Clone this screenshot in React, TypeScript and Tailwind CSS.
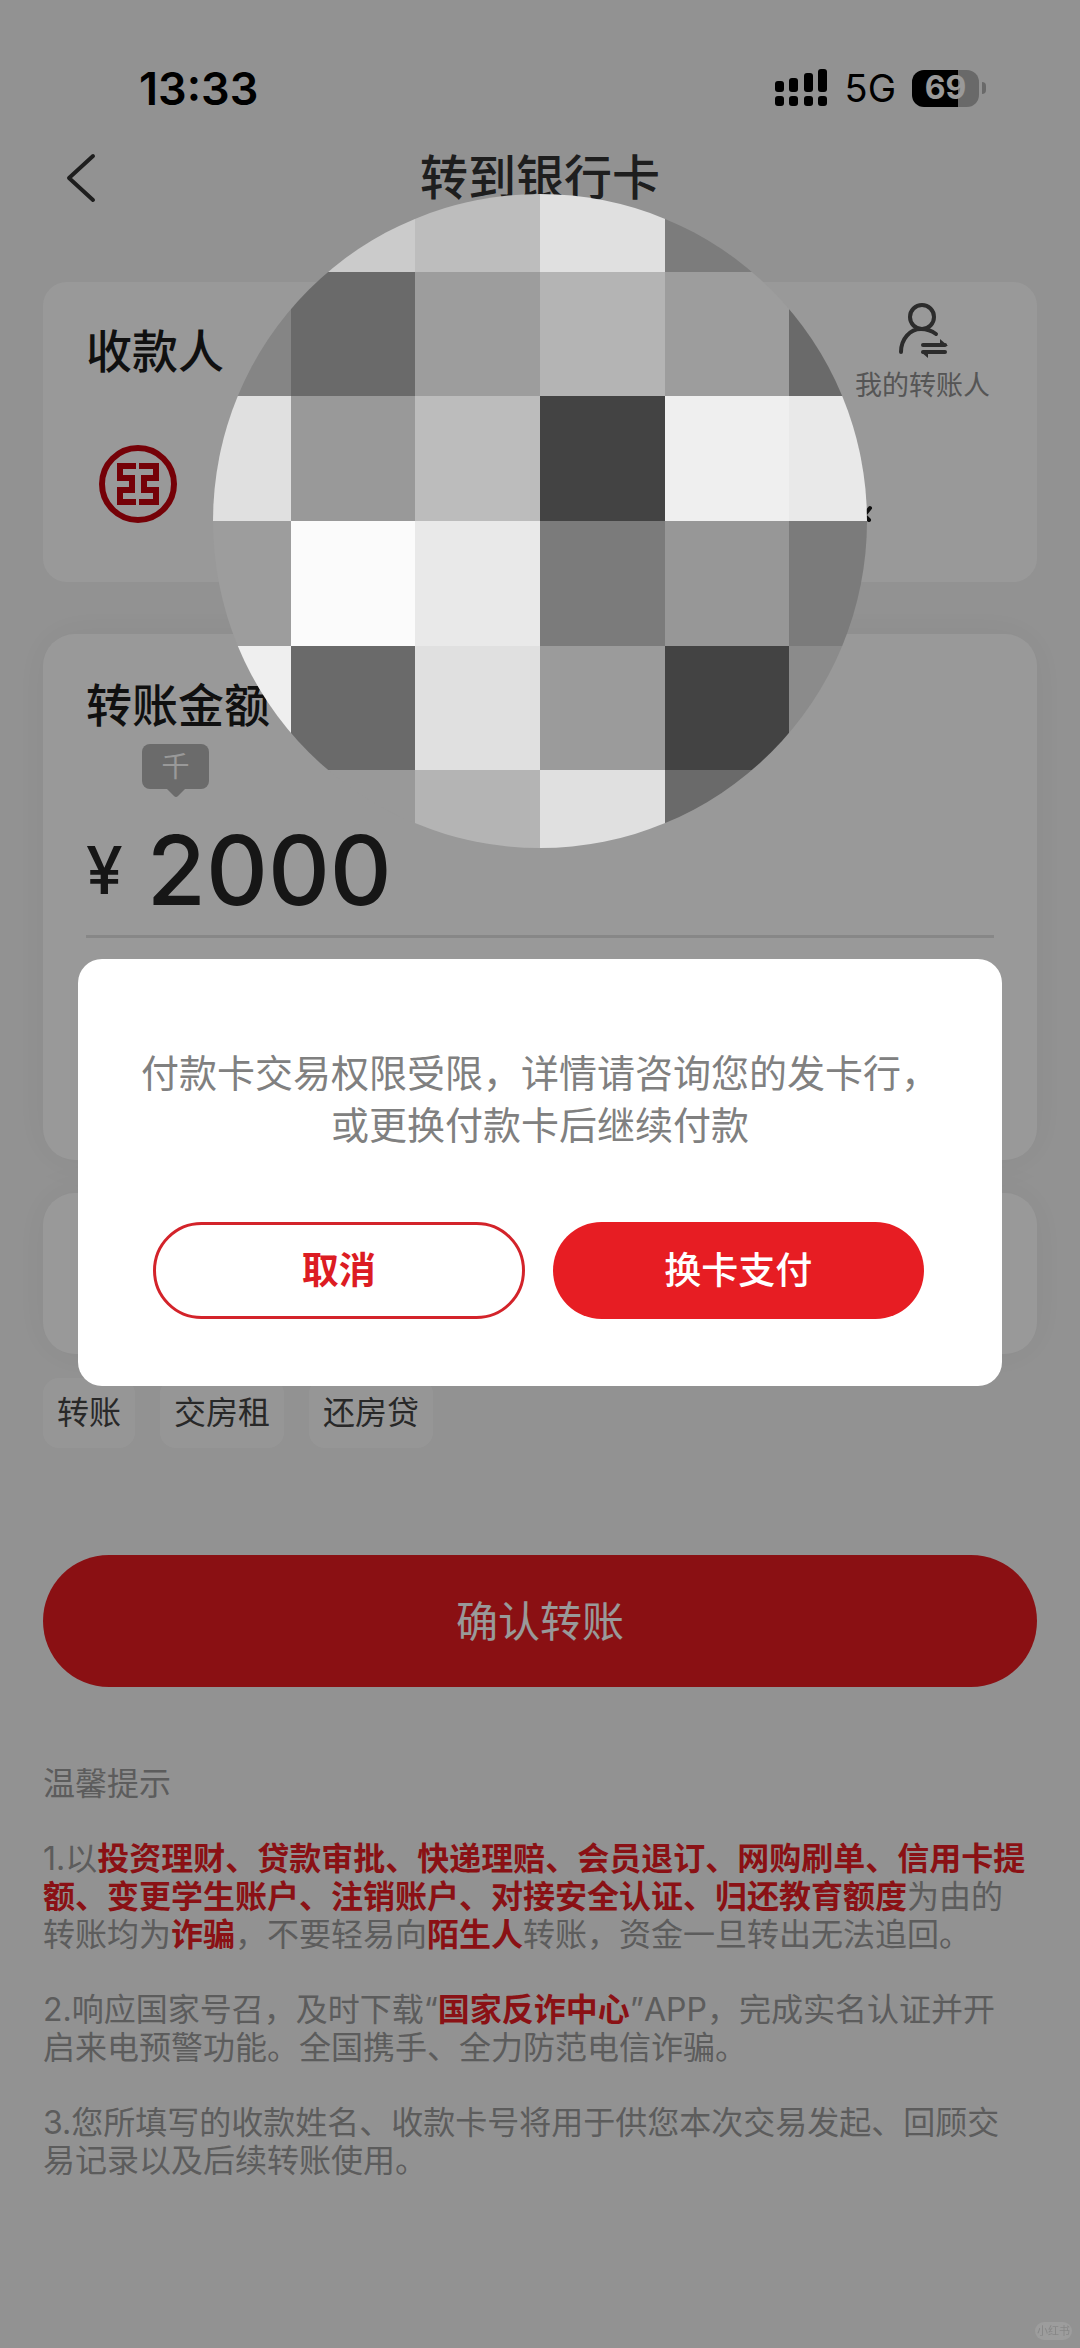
import React from "react";

const mosaic = [
  ["#929292", "#cbcbcb", "#bdbdbd", "#e0e0e0", "#7c7c7c", "#929292"],
  ["#858585", "#6a6a6a", "#9d9d9d", "#b4b4b4", "#9d9d9d", "#6a6a6a"],
  ["#e0e0e0", "#999999", "#bcbcbc", "#434343", "#efefef", "#e9e9e9"],
  ["#9d9d9d", "#fbfbfb", "#e9e9e9", "#7b7b7b", "#979797", "#7b7b7b"],
  ["#efefef", "#6a6a6a", "#e0e0e0", "#9b9b9b", "#434343", "#8b8b8b"],
  ["#999999", "#999999", "#b4b4b4", "#e0e0e0", "#6a6a6a", "#999999"],
];

// cell edges inside the 654px circle
const edges = [-47, 78, 202, 327, 452, 576, 701];

const purposes = ["转账", "交房租", "还房贷"];

function SignalIcon() {
  return (
    <svg width="54" height="38" viewBox="0 0 54 38" aria-hidden="true">
      <rect x="0" y="12" width="9" height="11" rx="3" />
      <rect x="14" y="9" width="9" height="14" rx="3" />
      <rect x="29" y="4" width="9" height="19" rx="3" />
      <rect x="43" y="0" width="9" height="23" rx="3" />
      <rect x="0" y="27" width="9" height="10" rx="3" />
      <rect x="14" y="27" width="9" height="10" rx="3" />
      <rect x="29" y="27" width="9" height="10" rx="3" />
      <rect x="43" y="27" width="9" height="10" rx="3" />
    </svg>
  );
}

function Battery() {
  return (
    <div className="flex items-center gap-[3px]">
      <div className="flex h-[37px] w-[67px] items-center justify-center rounded-xl bg-[linear-gradient(to_right,#000_69%,#b0b0b0_69%)] text-[32px] leading-none font-bold text-white">
        69
      </div>
      <div className="h-3 w-1 rounded-r-full bg-[#b0b0b0]" />
    </div>
  );
}

function StatusBar() {
  return (
    <div className="flex h-32 items-center justify-between pt-12 pr-[94px] pl-[139px] text-black">
      <span className="text-[45px] leading-none font-semibold">13:33</span>
      <div className="flex items-center gap-4">
        <SignalIcon />
        <span className="text-[38px] leading-none">5G</span>
        <Battery />
      </div>
    </div>
  );
}

function BankLogo() {
  return (
    <svg width="78" height="78" viewBox="0 0 78 78" role="img" aria-label="中国工商银行">
      <circle cx="39" cy="39" r="36" fill="none" stroke="#c4030d" strokeWidth="6" />
      <g fill="none" stroke="#c4030d" strokeWidth="6">
        <path d="M37 21H21V33H33V45H21V57H37" />
        <path d="M40 21H57V33H45V45H57V57H40" />
      </g>
    </svg>
  );
}

function PayeeIcon() {
  return (
    <svg width="50" height="56" viewBox="0 0 50 56" aria-hidden="true">
      <g fill="none" stroke="#4a4a4a" strokeWidth="4" strokeLinecap="round">
        <circle cx="24" cy="15" r="12" />
        <path d="M3 50C3 37 12 27 23 27C29 27 34 29 38 32" />
        <path d="M25 43H47" />
        <path d="M25 50H47" />
      </g>
      <path d="M42 37L50 44H42Z" fill="#4a4a4a" />
      <path d="M23 50H30V56Z" fill="#4a4a4a" />
    </svg>
  );
}

function MosaicCircle() {
  return (
    <svg
      className="absolute top-[194px] left-1/2 -translate-x-1/2"
      width="654"
      height="654"
      viewBox="0 0 654 654"
      aria-hidden="true"
    >
      <clipPath id="round">
        <circle cx="327" cy="327" r="327" />
      </clipPath>
      <g clipPath="url(#round)" shapeRendering="crispEdges">
        {mosaic.map((row, r) =>
          row.map((fill, c) => (
            <rect
              key={`${r}-${c}`}
              x={edges[c]}
              y={edges[r]}
              width={edges[c + 1] - edges[c]}
              height={edges[r + 1] - edges[r]}
              fill={fill}
            />
          ))
        )}
      </g>
    </svg>
  );
}

function Red({ children }: { children: React.ReactNode }) {
  return <strong className="font-bold text-[#e71d23]">{children}</strong>;
}

function Tips() {
  return (
    <section className="mt-[78px] space-y-[37px] pr-1 text-[32px] leading-[38px] text-[#999]">
      <h2>温馨提示</h2>
      <p>
        1.以
        <Red>
          投资理财、贷款审批、快递理赔、会员退订、网购刷单、信用卡提额、变更学生账户、注销账户、对接安全认证、归还教育额度
        </Red>
        为由的转账均为<Red>诈骗</Red>，不要轻易向<Red>陌生人</Red>转账，资金一旦转出无法追回。
      </p>
      <p>
        2.响应国家号召，及时下载“<Red>国家反诈中心</Red>”APP，完成实名认证并开
        <br />
        启来电预警功能。全国携手、全力防范电信诈骗。
      </p>
      <p>
        3.您所填写的收款姓名、收款卡号将用于供您本次交易发起、回顾交
        <br />
        易记录以及后续转账使用。
      </p>
    </section>
  );
}

function LimitDialog() {
  return (
    <div className="fixed inset-0 flex items-center px-[78px] pb-[3px]">
      <div
        role="dialog"
        aria-modal="true"
        aria-describedby="limit-message"
        className="w-full rounded-3xl bg-white pt-[88px] pb-[67px]"
      >
        <p id="limit-message" className="text-center text-[38px] leading-[52px] text-[#808080]">
          付款卡交易权限受限，详情请咨询您的发卡行，
          <br />
          或更换付款卡后继续付款
        </p>
        <div className="mt-[71px] grid grid-cols-2 gap-7 pr-[78px] pl-[75px] text-[37px]">
          <button className="h-[97px] rounded-full border-3 border-[#d3232a] font-bold text-[#dc1c23]">
            取消
          </button>
          <button className="h-[97px] rounded-full bg-[#e71d23] font-medium text-white">
            换卡支付
          </button>
        </div>
      </div>
    </div>
  );
}

export default function App() {
  return (
    <div className="relative min-h-screen bg-[#f4f4f4] pb-16 font-['Inter','Noto_Sans_CJK_SC',sans-serif]">
      <StatusBar />
      <header className="relative flex h-[100px] items-center justify-center">
        <button aria-label="返回" className="absolute left-[66px]">
          <svg width="30" height="50" viewBox="0 0 30 50" fill="none" stroke="#333" strokeWidth="4" strokeLinecap="round" strokeLinejoin="round">
            <path d="M27 3L3 25L27 47" />
          </svg>
        </button>
        <h1 className="text-[48px] font-medium text-[#333]">转到银行卡</h1>
      </header>

      <main className="px-[43px] pt-[54px]">
        <section className="h-[300px] rounded-3xl bg-white px-[43px] pt-5">
          <div className="flex items-start justify-between pr-1">
            <h2 className="mt-[22px] text-[46px] leading-[54px] font-medium text-[#1c1c1c]">收款人</h2>
            <button className="flex flex-col items-center gap-3 text-[27px] leading-8 text-[#8e8e8e]">
              <PayeeIcon />
              我的转账人
            </button>
          </div>
          <div className="mt-[43px] flex items-end justify-between pr-[121px] pl-[13px]">
            <BankLogo />
            <svg width="8" height="18" viewBox="0 0 8 18" fill="none" stroke="#1c1c1c" strokeWidth="4" strokeLinecap="round" aria-hidden="true">
              <path d="M5 3L1 8M1 12L4 15" />
            </svg>
          </div>
        </section>

        <section className="mt-[52px] h-[526px] rounded-4xl bg-white px-[43px] pt-11 shadow-[0_0_40px_rgba(0,0,0,0.05)]">
          <label htmlFor="amount" className="block text-[46px] leading-[54px] font-medium text-[#1c1c1c]">
            转账金额
          </label>
          <div className="relative mt-3 ml-14 flex h-[45px] w-[67px] items-center justify-center rounded-lg bg-[#b2b2b2] text-[28px] text-white">
            千
            <svg className="absolute top-full" width="18" height="8" viewBox="0 0 18 8" fill="#b2b2b2" aria-hidden="true">
              <path d="M0 0H18L11 7Q9 9 7 7Z" />
            </svg>
          </div>
          <div className="mt-6 flex items-center gap-6 border-b-3 border-[#e2e2e2] pb-2 font-medium text-[#262626]">
            <span className="text-[66px] leading-none">¥</span>
            <input
              id="amount"
              inputMode="decimal"
              defaultValue="2000"
              className="h-[114px] w-full min-w-0 bg-transparent text-[96px] outline-none"
            />
          </div>
        </section>

        <section className="mt-[33px] h-[161px] rounded-4xl bg-white shadow-[0_0_40px_rgba(0,0,0,0.05)]" />

        <div className="mt-6 flex gap-[25px] text-[32px] text-[#444]">
          {purposes.map((p) => (
            <button key={p} className="h-[70px] rounded-2xl bg-[#fbfbfb] px-[14px]">
              {p}
            </button>
          ))}
        </div>

        <button className="mt-[107px] h-[132px] w-full rounded-full bg-[#e61b21] text-[42px] text-white">
          确认转账
        </button>

        <Tips />
      </main>

      <div className="fixed inset-0 bg-black/40" />
      <MosaicCircle />
      <LimitDialog />
      <div className="absolute right-2 bottom-2 rounded-full bg-white/10 px-[2px] text-[11px] leading-[18px] text-black/15">
        小红书
      </div>
    </div>
  );
}
